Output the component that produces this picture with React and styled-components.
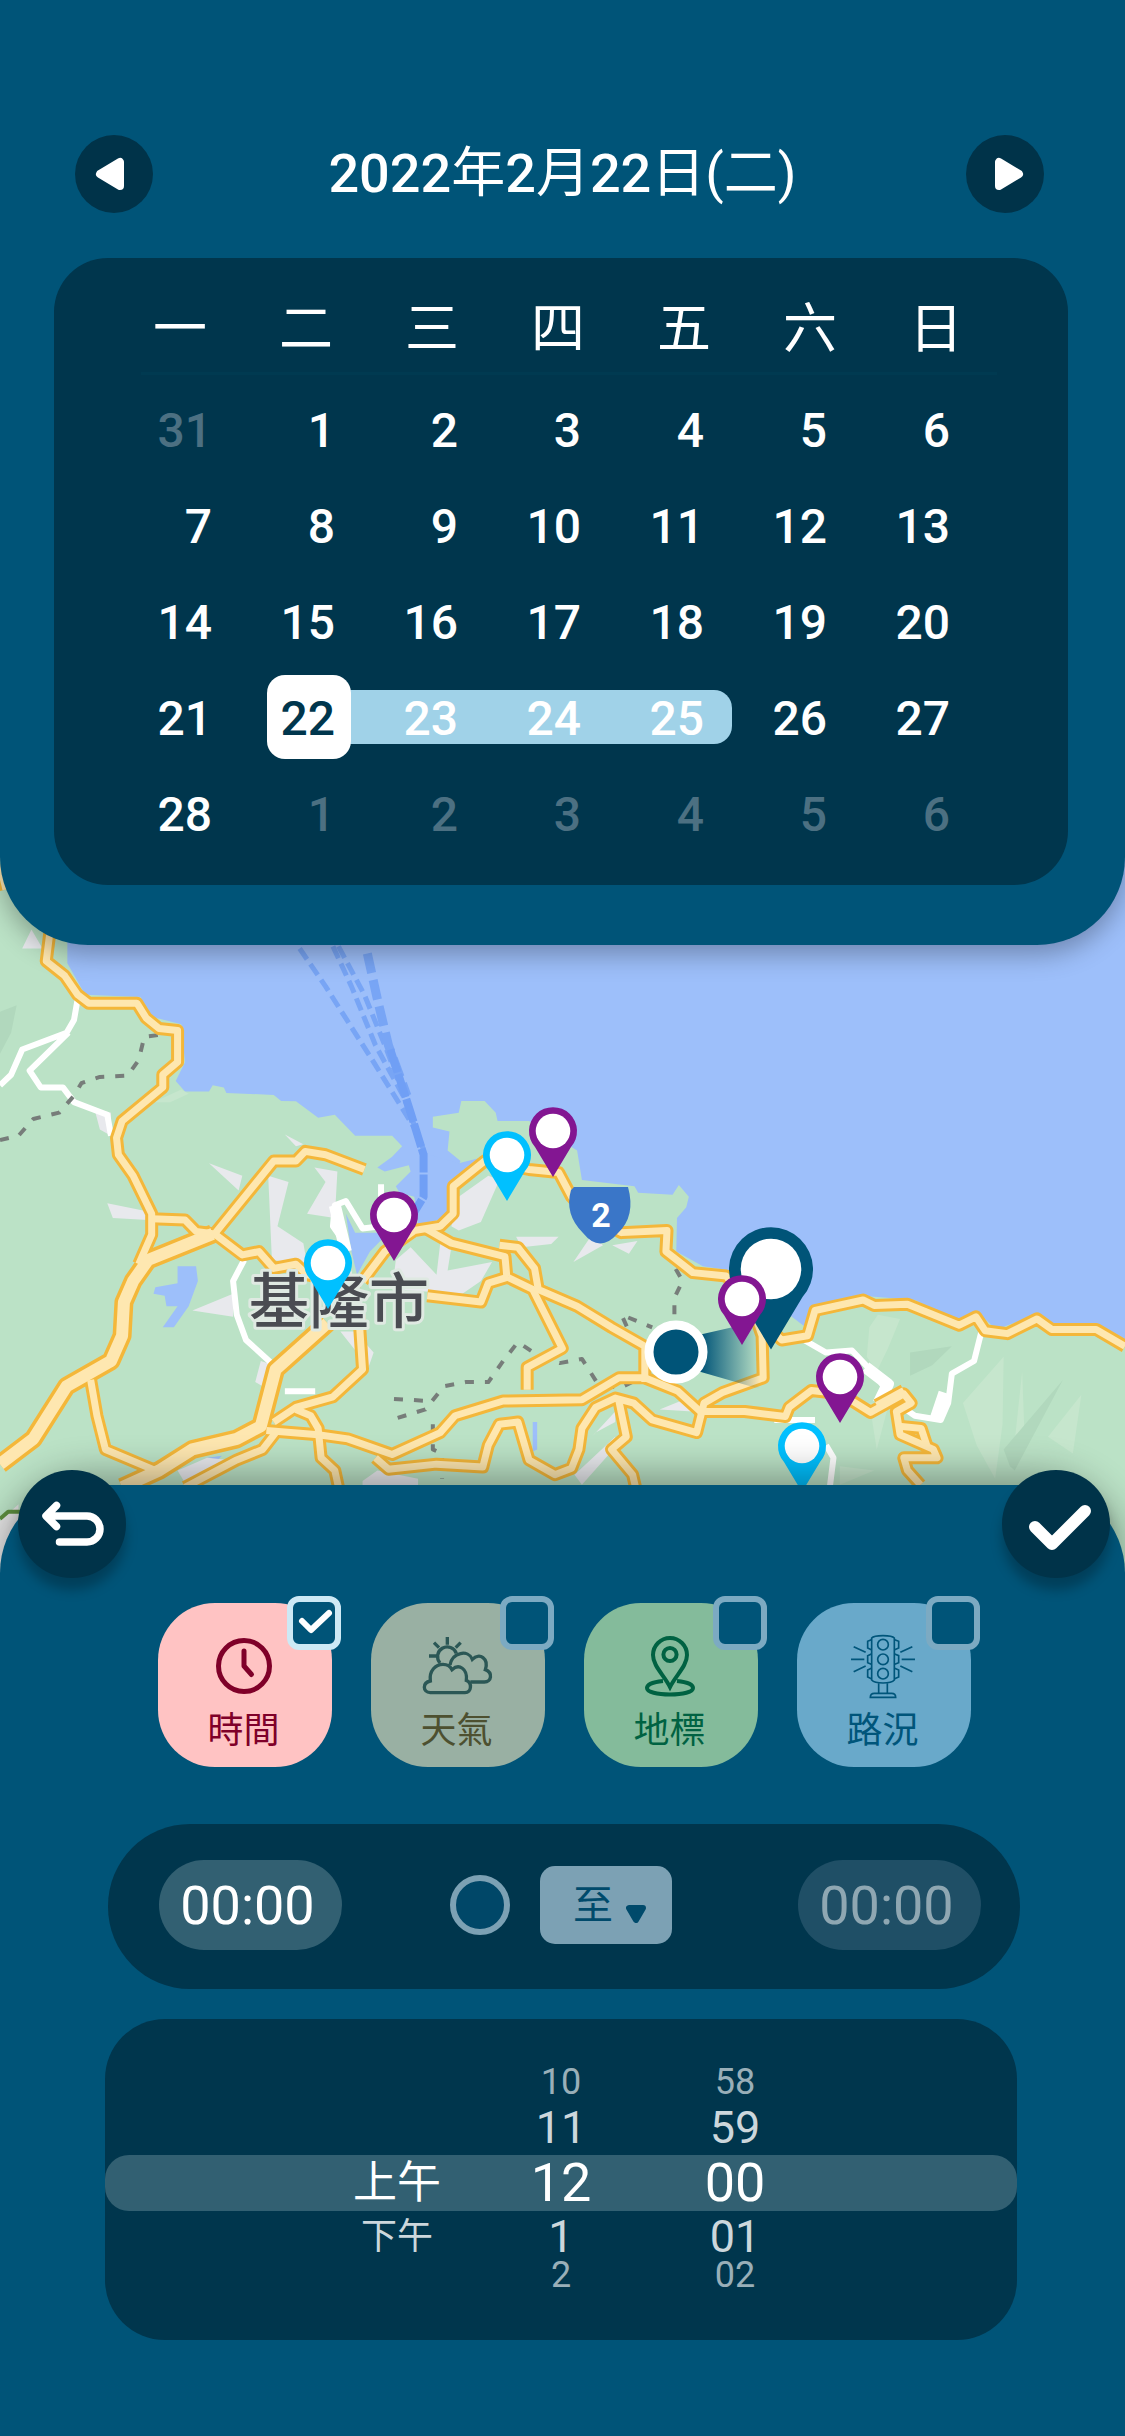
import React, { useState } from "react";
import styled, { createGlobalStyle } from "styled-components";

const color = {
  panel: "#005478",
  inset: "#00364d",
  button: "#003349",
  white: "#ffffff",
};

const latin = `Roboto, "Noto Sans CJK TC", sans-serif`;

const GlobalStyle = createGlobalStyle`
  *, *::before, *::after { box-sizing: border-box; }
  body { margin: 0; background: ${color.panel}; font-family: ${latin}; color: ${color.white}; }
  button, input, select { font-family: inherit; color: inherit; margin: 0; }
  svg { display: block; }
`;

const Page = styled.main`
  display: flex;
  flex-direction: column;
  min-height: 100vh;
  overflow: hidden;
`;

/* ---------- calendar panel ---------- */

const CalendarPanel = styled.section`
  position: relative;
  z-index: 1;
  padding: 135px 57px 60px 54px;
  background: ${color.panel};
  border-radius: 0 0 88px 88px;
  box-shadow: 0 9px 27px rgba(0, 0, 0, 0.3);
`;

const DateHeader = styled.header`
  display: flex;
  align-items: center;
  justify-content: space-between;
  margin: 0 24px 45px 21px;
`;

const DateTitle = styled.h1`
  margin: 0;
  padding-left: 6px;
  font-size: 54px;
  font-weight: 400;
  line-height: 78px;
`;

const Digits = styled.span`
  font-weight: 500;
`;

const StepButton = styled.button`
  width: 78px;
  height: 78px;
  padding: 0;
  border: 0;
  border-radius: 50%;
  background: ${color.button};
`;

const CalendarCard = styled.div`
  padding: 45px 0 30px;
  border-radius: 54px;
  background: ${color.inset};
`;

const WeekRow = styled.div`
  display: grid;
  grid-template-columns: repeat(7, 54px);
  justify-content: space-between;
  margin: 0 105px 15px 99px;
  font-size: 54px;
  line-height: 54px;
`;

const Divider = styled.hr`
  height: 3px;
  margin: 0 71px 12px 87px;
  border: 0;
  background: #003a51;
`;

const DayGrid = styled.div`
  display: grid;
  grid-template-columns: repeat(7, 84px);
  grid-template-rows: repeat(5, 84px);
  justify-content: space-between;
  row-gap: 12px;
  margin: 0 102px 0 90px;
`;

const RangeBar = styled.span`
  grid-row: 4;
  grid-column: 2 / 6;
  align-self: center;
  height: 54px;
  margin: 0 -12px 0 42px;
  border-radius: 18px;
  background: #a0d2e8;
`;

const Day = styled.button`
  grid-row: ${(p) => p.$row};
  grid-column: ${(p) => p.$col};
  z-index: 1;
  padding: 4px 16px 0 0;
  border: 0;
  border-radius: 18px;
  background: ${(p) => (p.$selected ? color.white : "transparent")};
  color: ${(p) => (p.$selected ? color.inset : p.$muted ? "#4c7082" : color.white)};
  font-size: 48px;
  font-weight: 500;
  line-height: 80px;
  text-align: right;
`;

/* ---------- map ---------- */

const MapArea = styled.section`
  position: relative;
  height: 740px;
  margin: -95px 0 -105px;
  background: #9dbffa;
`;

const MapLayer = styled.svg`
  position: absolute;
  inset: 0;
  width: 100%;
  height: 100%;

  text {
    font-family: ${latin};
    text-anchor: middle;
  }
`;

const Casing = styled.g`
  fill: none;
  stroke: #f4b73a;
  stroke-linejoin: round;
  path { vector-effect: non-scaling-stroke; stroke-width: 13px; }
  path.wide { stroke-width: 19px; }
`;

const Surface = styled.g`
  fill: none;
  stroke: #fee7b0;
  stroke-linejoin: round;
  path { vector-effect: non-scaling-stroke; stroke-width: 7px; }
  path.wide { stroke-width: 12px; }
`;

const Lines = styled.g`
  fill: none;
  stroke: ${(p) => p.$stroke};
  stroke-linejoin: round;
  path {
    vector-effect: non-scaling-stroke;
    stroke-width: ${(p) => p.$width}px;
    stroke-dasharray: ${(p) => p.$dash || "none"};
  }
`;

/* ---------- settings panel ---------- */

const SettingsPanel = styled.section`
  position: relative;
  z-index: 1;
  flex: 1;
  padding: 118px 0 96px;
  background: ${color.panel};
  border-radius: 88px 88px 0 0;
  box-shadow: 0 -12px 36px rgba(0, 0, 0, 0.32);
`;

const RoundButton = styled.button`
  position: absolute;
  top: -15px;
  ${(p) => (p.$side === "left" ? "left: 18px;" : "right: 15px;")}
  width: 108px;
  height: 108px;
  padding: 0;
  border: 0;
  border-radius: 50%;
  background: ${color.button};
  box-shadow: 0 12px 12px rgba(0, 0, 0, 0.25);
`;

const ChipRow = styled.div`
  display: flex;
  justify-content: space-between;
  margin: 0 154px 57px 158px;
`;

const Chip = styled.label`
  position: relative;
  display: flex;
  flex-direction: column;
  align-items: center;
  width: 174px;
  height: 164px;
  padding: 25px 3px 0 0;
  border-radius: 57px;
  background: ${(p) => p.$bg};
  color: ${(p) => p.$ink};
  font-size: 36px;
  line-height: 54px;
`;

const ChipIcon = styled.span`
  display: flex;
  align-items: center;
  height: 76px;
  color: ${(p) => p.$ink};
`;

const ChipCheck = styled.input`
  position: absolute;
  top: -7px;
  right: -9px;
  width: 54px;
  height: 54px;
  appearance: none;
  border: 6px solid #7caac2;
  border-radius: 12px;
  background: ${color.panel};

  &:checked { border-color: #cde9f5; }
  & + svg { display: none; }
  &:checked + svg {
    display: block;
    position: absolute;
    top: -7px;
    right: -9px;
    pointer-events: none;
  }
`;

const TimeBar = styled.div`
  display: flex;
  align-items: center;
  justify-content: space-between;
  margin: 0 105px 30px 108px;
  padding: 36px 39px 39px 51px;
  border-radius: 82px;
  background: ${color.inset};
`;

const TimeInput = styled.input`
  width: 183px;
  height: 90px;
  padding: 0 6px 0 0;
  border: 0;
  border-radius: 45px;
  background: ${(p) => (p.$dim ? "#1f4f66" : "#326072")};
  color: ${(p) => (p.$dim ? "#8fa7b2" : color.white)};
  font-size: 54px;
  text-align: center;
`;

const RangeMode = styled.div`
  display: flex;
  align-items: center;
  gap: 30px;
  padding-right: 18px;
`;

const ModeRadio = styled.input`
  width: 60px;
  height: 60px;
  appearance: none;
  border: 6px solid #7ca1b4;
  border-radius: 50%;
  background: #004768;
`;

const SelectWrap = styled.span`
  position: relative;
  display: block;

  svg {
    position: absolute;
    right: 26px;
    top: 39px;
    pointer-events: none;
  }
`;

const ModeSelect = styled.select`
  display: block;
  width: 132px;
  height: 78px;
  padding: 0 0 0 33px;
  appearance: none;
  border: 0;
  border-radius: 15px;
  background: #7ca1b4;
  color: #004a6b;
  font-size: 40px;
`;

const Picker = styled.div`
  display: grid;
  grid-template-columns: 1fr 112px 112px 112px 1fr;
  grid-template-rows: 42px 50px 60px 48px 28px;
  column-gap: 62px;
  align-items: center;
  margin: 0 108px 0 105px;
  padding: 42px 0 51px;
  border-radius: 60px;
  background: ${color.inset};
`;

const PickerBand = styled.span`
  grid-row: 3;
  grid-column: 1 / -1;
  height: 56px;
  border-radius: 24px;
  background: #326072;
`;

const pickerSize = [54, 45, 36];
const pickerInk = ["#ffffff", "#ccd7dc", "#99afb8"];

const Option = styled.button`
  grid-row: ${(p) => p.$row};
  grid-column: ${(p) => p.$col};
  z-index: 1;
  padding: 0;
  border: 0;
  background: none;
  color: ${(p) => pickerInk[p.$away]};
  font-size: ${(p) => pickerSize[p.$away]}px;
  line-height: 28px;
`;

const Meridiem = styled(Option)`
  padding-left: 20px;
  font-size: ${(p) => (p.$away ? 36 : 44)}px;
  white-space: nowrap;
`;

/* ---------- data ---------- */

const weekdays = ["一", "二", "三", "四", "五", "六", "日"];
const days = [31, ...Array.from({ length: 28 }, (_, i) => i + 1), 1, 2, 3, 4, 5, 6];

const roads = [
  { d: "M0 10L16 70" },
  { d: "M135 -24L135 170L125 240L175 275L210 320L240 340L370 340L395 375L430 400L480 405L480 480L440 510L440 540L330 620L315 660L320 700L360 750L410 840L410 890L375 960" },
  { d: "M410 852L500 855L530 882L580 888L740 715L800 715L825 692L880 700L985 735" },
  { d: "M580 888L655 938L700 930L740 970L800 960L830 985L900 1000L975 1000" },
  { d: "M575 888L400 950L360 1000L335 1050L330 1130L300 1190L180 1250L90 1375L0 1435", wide: true },
  { d: "M245 1235L262 1320L285 1400L420 1450" },
  { d: "M330 1490L430 1450L520 1400L640 1375L705 1345L745 1210L885 1100", wide: true },
  { d: "M970 1080L980 1210L900 1275L800 1300L740 1335" },
  { d: "M720 1355L860 1365L940 1375L1060 1412L1190 1360L1230 1320L1360 1285L1573 1282L1673 1230L1743 1230L1833 1262L1893 1310L2013 1310L2123 1322L2133 1300L2193 1260L2273 1268L2353 1312L2443 1268L2463 1290L2423 1310L2433 1365L2523 1400L2533 1420L2443 1420L2453 1450L2488 1484" },
  { d: "M2370 1295L2443 1260M2430 1345L2490 1350L2505 1390" },
  { d: "M500 1490L640 1425L710 1400L745 1360" },
  { d: "M800 1305L840 1320L860 1350L868 1420L905 1450L915 1490" },
  { d: "M1015 1420L1050 1447L1180 1435L1305 1442L1320 1390L1350 1340L1400 1335L1430 1425L1500 1460L1545 1445L1565 1400L1573 1350L1610 1300L1663 1278L1713 1290L1763 1330L1883 1360L1903 1290L1953 1265L2063 1230L2060 1130L2040 1080" },
  { d: "M980 1000L1040 930L1120 880L1190 870L1225 840L1225 775L1310 715L1430 735L1510 742L1545 800L1600 850L1680 885L1803 880L1800 930L1873 980L1963 988L2040 1080L2113 1140L2183 1130L2203 1070L2333 1045L2363 1058L2453 1055L2593 1105L2638 1085L2663 1118L2723 1125L2803 1090L2843 1115L2963 1115L3041 1155" },
  { d: "M1150 875L1220 910L1365 942L1370 990L1440 1020L1520 1160L1425 1205L1425 1258" },
  { d: "M1350 915L1400 920L1445 970L1455 1020L1560 1060L1653 1110L1743 1155L1743 1240" },
  { d: "M1155 1035L1300 1050L1320 1005L1375 990" },
  { d: "M1673 1285L1693 1370L1653 1400L1710 1460L1718 1490" },
];

const pins = [
  { x: 802, y: 1422, fill: "#00c0ff" },
  { x: 328, y: 1239, fill: "#00c0ff" },
  { x: 507, y: 1131, fill: "#00c0ff" },
  { x: 553, y: 1107, fill: "#831692" },
  { x: 394, y: 1191, fill: "#831692" },
  { x: 771, y: 1227, fill: "#005478", scale: 1.75 },
  { x: 742, y: 1275, fill: "#831692" },
  { x: 840, y: 1353, fill: "#831692" },
];

const hours = ["10", "11", "12", "1", "2"];
const minutes = ["58", "59", "00", "01", "02"];

/* ---------- drawings ---------- */

function Pin({ x, y, fill, scale = 1 }) {
  return (
    <g transform={`translate(${x} ${y}) scale(${scale})`}>
      <path d="M0 70L-18 40A24 24 0 1 1 18 40Z" fill={fill} />
      <circle cx="0" cy="24" r="17.3" fill="#fff" />
    </g>
  );
}

function MapTiles() {
  return (
    <MapLayer viewBox="0 -24 3041 1758" preserveAspectRatio="none" aria-hidden="true">
      <path
        fill="#bbe2c6"
        d="M0 -24H182V245L230 320L380 325L400 370L490 390L500 480L475 525L500 550L565 550L575 535L605 540L612 553L740 558L760 572L800 573L860 612L905 605L960 655L1060 655L1087 680L1060 705L1020 730L1040 740L1105 725L1110 740L1070 775L1080 790L1120 800L1130 860L1190 850L1215 770L1245 715L1210 690L1215 645L1170 635L1170 610L1240 600L1247 572L1310 572L1340 600L1345 620L1430 620L1560 690L1573 760L1715 775L1725 790L1818 795L1835 772L1862 800L1855 825L1830 850L1828 930L1900 965L1975 975L2193 1120L2205 1060L2330 1035L2473 1045L2593 1095L2643 1075L2693 1115L2803 1080L2843 1105L2963 1100L3041 1140V1734H0Z"
      />
      <g fill="#9dbffa">
        <path d="M1240 720L1310 705L1225 775L1210 850L1130 865L1120 790L1160 700Z" />
        <path d="M935 840L960 885L1050 885L1000 930L965 985L950 930Z" />
        <path d="M480 965L530 965L535 1000L510 1060L470 1110L440 1110L480 1060L450 1060L445 1035L415 1030L420 1015L480 1005Z" />
        <path d="M560 1420L600 1415L570 1440L530 1450ZM1440 1335L1452 1335L1452 1400L1440 1405Z" />
      </g>
      <g fill="#e8e9ed">
        <path d="M85 165L60 210L115 210ZM290 815L400 835V855L305 850ZM565 720L655 750L645 785ZM725 750L780 765L750 870L820 910L830 960L735 950ZM850 730L912 740L905 850L830 840L880 765ZM255 590L300 600L300 655L270 640Z" />
        <path d="M770 652L820 675L800 680ZM520 1070L630 1030V1085ZM690 1240L705 1190L740 1200L710 1250ZM1220 870L1240 800L1320 750L1350 760L1300 860L1240 880ZM1395 895L1510 895L1490 912L1410 920Z" />
        <path d="M1070 950L1110 920L1180 985L1190 910L1220 920L1210 975L1330 955L1300 1000L1250 1030L1060 1020ZM980 1475L1020 1450L1130 1470L1130 1490H980ZM920 1120L960 1120L1010 1170L990 1220L965 1170Z" />
        <path d="M1550 955L1600 890L1630 915ZM1655 915L1723 905L1700 935ZM1553 1460L1663 1370L1648 1410L1573 1484ZM1600 1370L1663 1310V1335L1610 1360ZM1783 1305L1853 1280L1873 1310Z" />
        <path d="M480 1450L560 1420L620 1425L500 1480Z" />
      </g>
      <g fill="#c6e6cd">
        <path d="M2350 1110L2373 1080L2433 1090L2400 1160L2370 1215L2343 1180ZM2603 1290L2713 1180L2710 1340L2690 1470L2640 1390ZM2743 1380L2763 1215L2770 1380ZM2833 1370L2923 1270L2900 1410ZM2350 1290L2400 1300L2370 1400Z" />
        <path d="M415 575L490 545L510 555L460 575ZM2270 1440L2363 1450L2270 1484Z" />
      </g>
      <g fill="#b1d8bd">
        <path d="M2460 1170L2573 1155L2520 1200L2460 1225ZM2713 1400L2873 1235L2773 1400L2743 1450L2730 1440ZM0 360L45 345L30 410L0 460Z" />
      </g>
      <Lines $stroke="#78a5f5" $width={5} $dash="13 6">
        <path d="M810 210L880 300L1010 480L1130 650" />
        <path d="M900 205L950 300L1015 440L1090 560L1150 700" />
        <path d="M915 205L985 320L1045 450L1100 580" />
      </Lines>
      <Lines $stroke="#78a5f5" $width={9} $dash="20 7">
        <path d="M993 222L1020 330L1050 440L1100 560" />
      </Lines>
      <Lines $stroke="#709ff5" $width={8} $dash="24 2">
        <path d="M1055 450L1110 600L1145 700L1145 800L1110 850" />
      </Lines>
      <Lines $stroke="#ffffff" $width={6}>
        <path d="M210 330L200 380L180 410L60 450L30 510L0 535M185 410L80 500L110 540L170 540L200 575L290 605L300 655" />
        <path d="M660 950L630 1000L640 1080L665 1140L740 1200M770 1262H852M940 920L900 870L905 820L935 810L980 875L1030 870V770" />
        <path d="M2173 1140L2233 1170L2303 1165L2373 1230L2395 1260L2373 1310M2653 1120L2633 1190L2573 1220L2563 1290L2543 1330L2473 1320L2440 1300M2093 1330H2203M2233 1390L2253 1420L2243 1490" />
      </Lines>
      <Lines $stroke="#ffffff" $width={12}>
        <path d="M905 820L935 930M2553 1265L2530 1325M2340 1205L2400 1245L2375 1290" />
      </Lines>
      <Lines $stroke="#777d7a" $width={4} $dash="9 11">
        <path d="M0 665L50 655L90 615L160 600L200 560L220 530L270 515L345 512L375 475L390 420L460 412L488 385" />
        <path d="M1065 1280L1160 1285M1075 1325L1150 1305L1200 1250L1260 1240L1320 1240L1360 1190L1400 1145L1460 1180L1513 1195L1573 1185L1613 1240L1673 1255L1733 1230L1748 1150L1703 1125L1680 1080L1763 1110" />
        <path d="M1800 930L1845 1000L1823 1040V1090M1170 1340V1400L1195 1410V1470" />
      </Lines>
      <Casing>
        {roads.map((r) => <path key={r.d} d={r.d} className={r.wide ? "wide" : ""} />)}
      </Casing>
      <Surface>
        {roads.map((r) => <path key={r.d} d={r.d} className={r.wide ? "wide" : ""} />)}
      </Surface>
      <path d="M0 1570L50 1530V1734H0Z" fill="#e8e8e8" />
      <Lines $stroke="#5f9140" $width={4}>
        <path d="M0 1565L22 1548H60" />
      </Lines>
    </MapLayer>
  );
}

function MapMarkers() {
  return (
    <MapLayer viewBox="0 850 1125 740" preserveAspectRatio="xMidYMid slice" role="img" aria-label="基隆市">
      <defs>
        <linearGradient id="heading" x1="0" x2="1" y1="0" y2="0">
          <stop offset="0.1" stopColor="#005478" />
          <stop offset="1" stopColor="#005478" stopOpacity="0" />
        </linearGradient>
      </defs>
      <text x="339" y="1323" fontSize="60" fontWeight="500" fill="#4a4c52" stroke="#dfe9e2" strokeWidth="6" strokeLinejoin="round" paintOrder="stroke">
        基隆市
      </text>
      <path d="M574 1187H628Q636 1216 618 1233Q600 1254 583 1233Q564 1214 571 1190Z" fill="#3a76c8" />
      <text x="601" y="1227" fontSize="34" fontWeight="700" fill="#fff">2</text>
      <path d="M694 1336L760 1321V1389L694 1370Z" fill="url(#heading)" />
      {pins.map((p) => <Pin key={`${p.x}-${p.y}`} {...p} />)}
      <circle cx="676" cy="1352" r="27" fill="#005478" stroke="#fff" strokeWidth="9" />
    </MapLayer>
  );
}

function ClockIcon() {
  return (
    <svg width="56" height="56" viewBox="0 0 56 56" fill="none" stroke="currentColor" strokeWidth="5" strokeLinecap="round" strokeLinejoin="round">
      <circle cx="28" cy="28" r="25.5" />
      <path d="M28 13V28L35.500 36.500" />
    </svg>
  );
}

function WeatherIcon() {
  return (
    <svg width="84" height="72" viewBox="0 0 252 216" fill="none" stroke="currentColor" strokeWidth="10">
      <path d="M97 21V44M42 78H66M57 38L72 53M137 38L122 53M75 99A29 29 0 1 1 124 70" />
      <path d="M105 105C112 66 160 58 172 88C194 66 222 86 211 119C234 128 230 156 208 156H166" />
      <path d="M46 188C22 186 22 158 46 153C42 122 62 103 84 103C97 103 106 109 111 119C132 100 158 116 154 151C172 158 170 188 150 188Z" />
    </svg>
  );
}

function LandmarkIcon() {
  return (
    <svg width="60" height="66" viewBox="0 0 60 66" fill="none" stroke="currentColor" strokeWidth="4">
      <path d="M30 54C24 42 13 33 13 22A17 17 0 0 1 47 22C47 33 36 42 30 54Z" />
      <circle cx="30" cy="21.5" r="6.6" />
      <path d="M23 48C12 49 7 52 7 55C7 59 17 61.500 30 61.500S53 59 53 55C53 52 48 49 37 48" />
    </svg>
  );
}

function TrafficIcon() {
  return (
    <svg width="84" height="76" viewBox="0 0 252 228" fill="none" stroke="currentColor" strokeWidth="5">
      <path d="M92 30Q98 23 126 23T160 30V156Q152 165 126 165T92 156Z" />
      <circle cx="126" cy="50" r="16" />
      <circle cx="126" cy="94" r="16" />
      <circle cx="126" cy="137" r="16" />
      <path d="M91 35L80 40V60L91 65M91 78L80 83V104L91 109M91 121L80 126V147L91 152M161 35L173 40V60L161 65M161 78L173 83V104L161 109M161 121L173 126V147L161 152" />
      <path d="M113 166V195M139 166V195M88 208Q88 196 100 196H152Q164 196 164 208Z" />
      <path d="M30 94H70M182 94H222M38 56L74 73M38 131L74 114M214 56L178 73M214 131L178 114" />
    </svg>
  );
}

const chips = [
  { id: "time", label: "時間", bg: "#ffc3c3", ink: "#7f0029", Icon: ClockIcon },
  { id: "weather", label: "天氣", bg: "#99b0a3", ink: "#4d5030", iconInk: "#2b5755", Icon: WeatherIcon },
  { id: "landmark", label: "地標", bg: "#84bb9b", ink: "#006242", Icon: LandmarkIcon },
  { id: "traffic", label: "路況", bg: "#69a9ca", ink: "#00557a", Icon: TrafficIcon },
];

function StepArrow({ next }) {
  return (
    <svg width="78" height="78" viewBox="0 0 78 78">
      <path
        d={next ? "M53 39L33 27V51Z" : "M25 39L45 27V51Z"}
        fill="#fff"
        stroke="#fff"
        strokeWidth="8"
        strokeLinejoin="round"
      />
    </svg>
  );
}

/* ---------- sections ---------- */

function Calendar() {
  const [selected, setSelected] = useState(22);
  return (
    <CalendarPanel>
      <DateHeader>
        <StepButton aria-label="前一天"><StepArrow /></StepButton>
        <DateTitle>
          <Digits>2022</Digits>年<Digits>2</Digits>月<Digits>22</Digits>日(二)
        </DateTitle>
        <StepButton aria-label="後一天"><StepArrow next /></StepButton>
      </DateHeader>
      <CalendarCard>
        <WeekRow>
          {weekdays.map((d) => <span key={d}>{d}</span>)}
        </WeekRow>
        <Divider />
        <DayGrid>
          <RangeBar />
          {days.map((d, i) => (
            <Day
              key={i}
              $row={Math.floor(i / 7) + 1}
              $col={(i % 7) + 1}
              $muted={i < 1 || i > 28}
              $selected={i === selected}
              onClick={() => setSelected(i)}
            >
              {d}
            </Day>
          ))}
        </DayGrid>
      </CalendarCard>
    </CalendarPanel>
  );
}

function Settings() {
  return (
    <SettingsPanel>
      <RoundButton $side="left" aria-label="返回">
        <svg width="108" height="108" viewBox="0 0 108 108" fill="none" stroke="#fff" strokeWidth="7.500" strokeLinecap="round" strokeLinejoin="round">
          <path d="M38.500 35.500L28 46L38.500 56.500M30 46H69A13 13 0 0 1 69 72H41.500" />
        </svg>
      </RoundButton>
      <RoundButton $side="right" aria-label="確認">
        <svg width="108" height="108" viewBox="0 0 108 108" fill="none" stroke="#fff" strokeWidth="12" strokeLinecap="round" strokeLinejoin="round">
          <path d="M33 57L50 74L83 41" />
        </svg>
      </RoundButton>
      <ChipRow>
        {chips.map(({ id, label, bg, ink, iconInk, Icon }) => (
          <Chip key={id} $bg={bg} $ink={ink} htmlFor={id}>
            <ChipIcon $ink={iconInk || ink}><Icon /></ChipIcon>
            {label}
            <ChipCheck id={id} type="checkbox" defaultChecked={id === "time"} />
            <svg width="54" height="54" viewBox="0 0 54 54" fill="none" stroke="#fff" strokeWidth="6" strokeLinecap="round" strokeLinejoin="round">
              <path d="M15 25L24 34L42 17" />
            </svg>
          </Chip>
        ))}
      </ChipRow>
      <TimeBar>
        <TimeInput aria-label="開始時間" defaultValue="00:00" />
        <RangeMode>
          <ModeRadio type="radio" aria-label="時段" />
          <SelectWrap>
            <ModeSelect aria-label="時段方式">
              <option>至</option>
            </ModeSelect>
            <svg width="20" height="18" viewBox="0 0 20 18">
              <path d="M3 3H17L10 15Z" fill="#004a6b" stroke="#004a6b" strokeWidth="6" strokeLinejoin="round" />
            </svg>
          </SelectWrap>
        </RangeMode>
        <TimeInput $dim aria-label="結束時間" defaultValue="00:00" />
      </TimeBar>
      <Picker>
        <PickerBand />
        <Meridiem $row={3} $col={2} $away={0}>上午</Meridiem>
        <Meridiem $row={4} $col={2} $away={1}>下午</Meridiem>
        {hours.map((h, i) => (
          <Option key={h} $row={i + 1} $col={3} $away={Math.abs(i - 2)}>{h}</Option>
        ))}
        {minutes.map((m, i) => (
          <Option key={m} $row={i + 1} $col={4} $away={Math.abs(i - 2)}>{m}</Option>
        ))}
      </Picker>
    </SettingsPanel>
  );
}

export default function App() {
  return (
    <Page>
      <GlobalStyle />
      <Calendar />
      <MapArea>
        <MapTiles />
        <MapMarkers />
      </MapArea>
      <Settings />
    </Page>
  );
}
